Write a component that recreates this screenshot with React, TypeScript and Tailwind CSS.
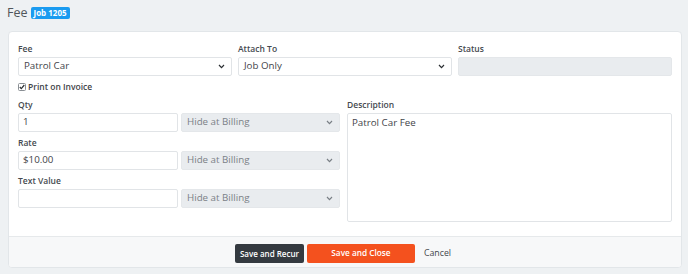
import React from "react";

const font = { fontFamily: '"Open Sans", "Liberation Sans", sans-serif' };

function Chevron({ muted }: { muted?: boolean }) {
  return (
    <svg width="7" height="5" viewBox="0 0 7 5" className="shrink-0">
      <path
        d="M1 1 L3.5 3.6 L6 1"
        fill="none"
        stroke={muted ? "#7a8086" : "#2b2f33"}
        strokeWidth="1.2"
      />
    </svg>
  );
}

function Label({ children }: { children: React.ReactNode }) {
  return (
    <div className="h-[12px] leading-[12px] text-[8.5px] font-semibold text-[#454a4f] mb-[2px]">
      {children}
    </div>
  );
}

function Select({ value, muted }: { value: string; muted?: boolean }) {
  return (
    <div
      className={
        muted
          ? "h-[19px] flex items-center justify-between pl-[5px] pr-[6px] rounded-[2px] border border-[#e4e7ea] bg-[#e9ecef] text-[9.75px] text-[#7b8187]"
          : "h-[19px] flex items-center justify-between pl-[5px] pr-[6px] rounded-[2px] border border-[#e1e4e7] bg-white text-[9.75px] text-[#3f4449]"
      }
    >
      <span>{value}</span>
      <Chevron muted={muted} />
    </div>
  );
}

function TextInput({ value }: { value?: string }) {
  return (
    <div className="h-[19px] flex items-center px-[4px] rounded-[2px] border border-[#e1e4e7] bg-white text-[9.75px] text-[#3f4449]">
      {value}
    </div>
  );
}

function PricedRow({ label, value }: { label: string; value?: string }) {
  return (
    <div>
      <Label>{label}</Label>
      <div className="grid grid-cols-[160px_159px] gap-[3px]">
        <TextInput value={value} />
        <Select value="Hide at Billing" muted />
      </div>
    </div>
  );
}

export default function App() {
  return (
    <div className="w-[688px] h-[274px] bg-[#eef1f3] overflow-hidden" style={font}>
      <div className="h-[31px] flex items-start pt-[6px] pl-[7px] gap-[3px]">
        <span className="text-[12.5px] leading-[14px] text-[#50565b]">Fee</span>
        <span className="mt-[1px] h-[12px] px-[3px] rounded-[2px] bg-[#1a9bf0] text-white text-[8px] font-bold leading-[12px]">
          Job 1205
        </span>
      </div>

      <div className="ml-[8px] w-[674px] h-[237px] rounded-[4px] border border-[#e2e6e9] bg-white flex flex-col overflow-hidden">
        <div className="flex-1 px-[9px] pt-[11px]">
          <div className="grid grid-cols-3 gap-x-[6px]">
            <div>
              <Label>Fee</Label>
              <Select value="Patrol Car" />
            </div>
            <div>
              <Label>Attach To</Label>
              <Select value="Job Only" />
            </div>
            <div>
              <Label>Status</Label>
              <div className="h-[19px] rounded-[2px] border border-[#e4e7ea] bg-[#e9ecef]" />
            </div>
          </div>

          <div className="h-[12px] mt-[5px] flex items-center gap-[2px] text-[8.5px] font-semibold text-[#3f4449]">
            <svg width="8" height="8" viewBox="0 0 8 8">
              <rect x="0.5" y="0.5" width="7" height="7" rx="1" fill="white" stroke="#8a8f94" />
              <path d="M1.8 4 L3.3 5.6 L6.3 2" fill="none" stroke="#2b2f33" strokeWidth="1.2" />
            </svg>
            <span>Print on Invoice</span>
          </div>

          <div className="mt-[6px] flex gap-[7px]">
            <div className="flex flex-col gap-[5px]">
              <PricedRow label="Qty" value="1" />
              <PricedRow label="Rate" value="$10.00" />
              <PricedRow label="Text Value" />
            </div>
            <div className="flex-1">
              <Label>Description</Label>
              <div className="h-[109px] rounded-[2px] border border-[#e1e4e7] px-[4px] pt-[2px] text-[9.75px] text-[#3f4449]">
                Patrol Car Fee
              </div>
            </div>
          </div>
        </div>

        <div className="h-[31px] border-t border-[#e6e9eb] bg-[#f7f8f9] flex items-center justify-center gap-[3px] pl-[2px] pt-[3px]">
          <button className="h-[19px] w-[69px] rounded-[2px] bg-[#343a40] text-white text-[8px] font-semibold">
            Save and Recur
          </button>
          <button className="h-[19px] w-[108px] rounded-[2px] bg-[#f4511e] text-white text-[8.25px] font-semibold">
            Save and Close
          </button>
          <button className="h-[19px] px-[6px] text-[8.75px] text-[#3f4449]">Cancel</button>
        </div>
      </div>
    </div>
  );
}
